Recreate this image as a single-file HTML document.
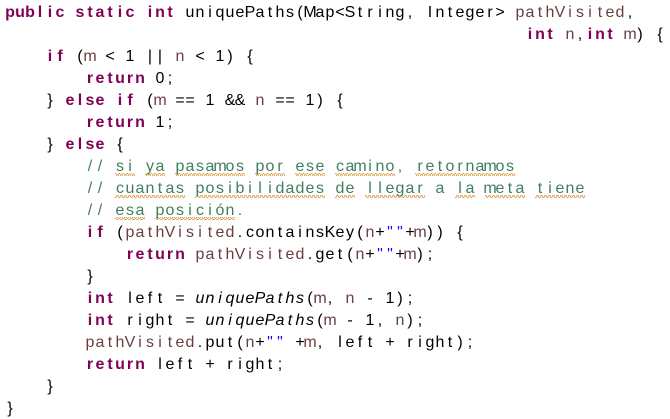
<!DOCTYPE html>
<html><head><meta charset="utf-8"><style>
html,body{margin:0;padding:0;background:#fff;width:670px;height:419px;overflow:hidden}
svg{display:block}
text{font-family:"Liberation Sans","DejaVu Sans",sans-serif;font-size:16px;fill:#000;text-anchor:middle}
.k{fill:#7F0055;font-weight:bold}
.v{fill:#6A3E3E}
.s{fill:#2A00FF}
.c{fill:#3F7F5F}
.i{font-style:italic}
</style></head><body>
<svg width="670" height="419" xmlns="http://www.w3.org/2000/svg">
<defs><pattern id="sq" width="4" height="3" patternUnits="userSpaceOnUse"><path d="M0 2.5 L1 0.5 L2 0.5 L3 2.5 L4 2.5" fill="none" stroke="#e0a050" stroke-width="0.9"/></pattern></defs>
<g fill="url(#sq)">
<rect x="115" y="173" width="20" height="3"/><rect x="145" y="173" width="20" height="3"/><rect x="175" y="173" width="70" height="3"/><rect x="255" y="173" width="30" height="3"/><rect x="295" y="173" width="30" height="3"/><rect x="335" y="173" width="60" height="3"/><rect x="415" y="173" width="100" height="3"/>
<rect x="115" y="195" width="70" height="3"/><rect x="195" y="195" width="130" height="3"/><rect x="335" y="195" width="20" height="3"/><rect x="365" y="195" width="60" height="3"/><rect x="455" y="195" width="20" height="3"/><rect x="485" y="195" width="40" height="3"/><rect x="535" y="195" width="50" height="3"/>
<rect x="115" y="217" width="30" height="3"/><rect x="155" y="217" width="80" height="3"/>
</g>
<text y="17"><tspan class="k" x="10 20 30 40 50 60">public</tspan><tspan class="k" x="80 90 100 110 120 130">static</tspan><tspan class="k" x="150 160 170">int</tspan><tspan x="190 200 210 220 230 240 250 260 270 280 290 300 310 320 330 340 350 360 370 380 390 400 410">uniquePaths(Map&lt;String,</tspan><tspan x="430 440 450 460 470 480 490 500">Integer&gt;</tspan><tspan class="v" x="520 530 540 550 560 570 580 590 600 610 620">pathVisited</tspan><tspan x="630">,</tspan></text>
<text y="39"><tspan class="k" x="530 540 550">int</tspan><tspan class="v" x="570">n</tspan><tspan x="580">,</tspan><tspan class="k" x="590 600 610">int</tspan><tspan class="v" x="630">m</tspan><tspan x="640 660">){</tspan></text>
<text y="61"><tspan class="k" x="50 60">if</tspan><tspan x="80">(</tspan><tspan class="v" x="90">m</tspan><tspan x="110 130 150 160">&lt;1||</tspan><tspan class="v" x="180">n</tspan><tspan x="200 220 230 250">&lt;1){</tspan></text>
<text y="83"><tspan class="k" x="90 100 110 120 130 140">return</tspan><tspan x="160 170">0;</tspan></text>
<text y="105"><tspan x="50">}</tspan><tspan class="k" x="70 80 90 100">else</tspan><tspan class="k" x="120 130">if</tspan><tspan x="150">(</tspan><tspan class="v" x="160">m</tspan><tspan x="180 190 210 230 240">==1&amp;&amp;</tspan><tspan class="v" x="260">n</tspan><tspan x="280 290 310 320 340">==1){</tspan></text>
<text y="127"><tspan class="k" x="90 100 110 120 130 140">return</tspan><tspan x="160 170">1;</tspan></text>
<text y="149"><tspan x="50">}</tspan><tspan class="k" x="70 80 90 100">else</tspan><tspan x="120">{</tspan></text>
<text y="171" class="c"><tspan x="90 100">//</tspan><tspan x="120 130">si</tspan><tspan x="150 160">ya</tspan><tspan x="180 190 200 210 220 230 240">pasamos</tspan><tspan x="260 270 280">por</tspan><tspan x="300 310 320">ese</tspan><tspan x="340 350 360 370 380 390">camino</tspan><tspan x="400">,</tspan><tspan x="420 430 440 450 460 470 480 490 500 510">retornamos</tspan></text>
<text y="193" class="c"><tspan x="90 100">//</tspan><tspan x="120 130 140 150 160 170 180">cuantas</tspan><tspan x="200 210 220 230 240 250 260 270 280 290 300 310 320">posibilidades</tspan><tspan x="340 350">de</tspan><tspan x="370 380 390 400 410 420">llegar</tspan><tspan x="440">a</tspan><tspan x="460 470">la</tspan><tspan x="490 500 510 520">meta</tspan><tspan x="540 550 560 570 580">tiene</tspan></text>
<text y="215" class="c"><tspan x="90 100">//</tspan><tspan x="120 130 140">esa</tspan><tspan x="160 170 180 190 200 210 220 230">posición</tspan><tspan x="240">.</tspan></text>
<text y="237"><tspan class="k" x="90 100">if</tspan><tspan x="120">(</tspan><tspan class="v" x="130 140 150 160 170 180 190 200 210 220 230">pathVisited</tspan><tspan x="240 250 260 270 280 290 300 310 320 330 340 350 360">.containsKey(</tspan><tspan class="v" x="370">n</tspan><tspan x="380">+</tspan><tspan class="s" x="390 400">""</tspan><tspan x="410">+</tspan><tspan class="v" x="420">m</tspan><tspan x="430 440 460">)){</tspan></text>
<text y="259"><tspan class="k" x="130 140 150 160 170 180">return</tspan><tspan class="v" x="200 210 220 230 240 250 260 270 280 290 300">pathVisited</tspan><tspan x="310 320 330 340 350">.get(</tspan><tspan class="v" x="360">n</tspan><tspan x="370">+</tspan><tspan class="s" x="380 390">""</tspan><tspan x="400">+</tspan><tspan class="v" x="410">m</tspan><tspan x="420 430">);</tspan></text>
<text y="281"><tspan x="90">}</tspan></text>
<text y="303"><tspan class="k" x="90 100 110">int</tspan><tspan x="130 140 150 160">left</tspan><tspan x="180">=</tspan><tspan class="i" x="200 210 220 230 240 250 260 270 280 290 300">uniquePaths</tspan><tspan x="310">(</tspan><tspan class="v" x="320">m</tspan><tspan x="330">,</tspan><tspan class="v" x="350">n</tspan><tspan x="370 390 400 410">-1);</tspan></text>
<text y="325"><tspan class="k" x="90 100 110">int</tspan><tspan x="130 140 150 160 170">right</tspan><tspan x="190">=</tspan><tspan class="i" x="210 220 230 240 250 260 270 280 290 300 310">uniquePaths</tspan><tspan x="320">(</tspan><tspan class="v" x="330">m</tspan><tspan x="350 370 380">-1,</tspan><tspan class="v" x="400">n</tspan><tspan x="410 420">);</tspan></text>
<text y="347"><tspan class="v" x="90 100 110 120 130 140 150 160 170 180 190">pathVisited</tspan><tspan x="200 210 220 230 240">.put(</tspan><tspan class="v" x="250">n</tspan><tspan x="260">+</tspan><tspan class="s" x="270 280">""</tspan><tspan x="300">+</tspan><tspan class="v" x="310">m</tspan><tspan x="320">,</tspan><tspan x="340 350 360 370">left</tspan><tspan x="390">+</tspan><tspan x="410 420 430 440 450">right</tspan><tspan x="460 470">);</tspan></text>
<text y="369"><tspan class="k" x="90 100 110 120 130 140">return</tspan><tspan x="160 170 180 190">left</tspan><tspan x="210">+</tspan><tspan x="230 240 250 260 270">right</tspan><tspan x="280">;</tspan></text>
<text y="391"><tspan x="50">}</tspan></text>
<text y="413"><tspan x="10">}</tspan></text>
</svg>
</body></html>
